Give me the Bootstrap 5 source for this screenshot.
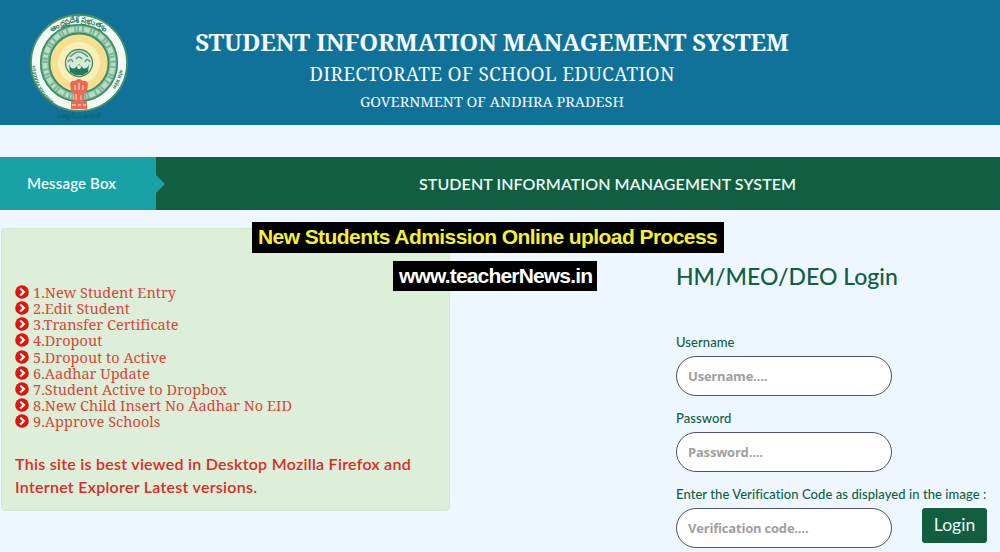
<!DOCTYPE html>
<html lang="en">
<head>
<meta charset="utf-8">
<meta name="viewport" content="width=device-width, initial-scale=1">
<title>Student Information Management System</title>
<link rel="stylesheet" href="https://cdn.jsdelivr.net/npm/bootstrap@5.3.0/dist/css/bootstrap.min.css">
<style>
  body { background: #eef7ff; font-family: Lato, "Open Sans", sans-serif; height: 552px; overflow: hidden; color: #10603f; }
  .serif { font-family: "Noto Serif", "DejaVu Serif Condensed", "DejaVu Serif", serif; font-stretch: condensed; }
  .site-header { background: #107299; height: 125px; color: #f2fafe; }
  .emblem { width: 100px; height: 114px; margin: 10px 0 0 29px; }
  .titles { width: 680px; margin-left: 23px; white-space: nowrap; }
  .t1 { font-size: 24px; line-height: 32px; font-weight: 700; margin: 26px 0 0; letter-spacing: -.13px; }
  .t2 { font-size: 19px; line-height: 28px; margin: 2px 0 0; letter-spacing: .24px; }
  .t3 { font-size: 14.5px; line-height: 20px; margin: 3px 0 0; }
  .ribbon { margin-top: 32px; height: 53px; background: #115f40; color: #eefaf5; font-weight: 600; }
  .ribbon-tag { width: 156px; background: #18a2a5; padding-left: 27px; font-size: 15px; letter-spacing: .15px; }
  .ribbon-tag::after { content: ""; position: absolute; left: 156px; top: 18px; border: 9px solid transparent; border-left-color: #18a2a5; border-right: 0; }
  .ribbon-title { padding-left: 263px; font-size: 16px; letter-spacing: .09px; }
  .message-panel { width: 449px; height: 283px; margin: 18px 0 0 1px; padding: 55px 13px 0; background: #ddefd8; border: 1px solid #d3e9cc; border-radius: 4px; }
  .menu-line { font-size: 14.5px; line-height: 16.15px; height: 16.15px; color: #d8463a; white-space: nowrap; gap: 4px; letter-spacing: .03px; }
  .menu-line svg { width: 14px; height: 14px; flex: none; }
  .notice { font-size: 16px; line-height: 22.5px; margin-top: 24px; color: #dc2a26; font-weight: 600; letter-spacing: .27px; white-space: nowrap; }
  .login-form { width: 324px; margin-top: 48px; }
  .login-form h1 { font-size: 23px; line-height: 36px; font-weight: 500; margin: 0 0 39px; white-space: nowrap; }
  .login-form label { display: block; font-size: 13px; line-height: 18px; height: 23px; font-weight: 500; letter-spacing: .07px; white-space: nowrap; }
  .login-form .form-control { width: 216px; height: 40px; border: 1px solid #4d5078; border-radius: 20px; padding: 0 11px; font: 700 13px "Open Sans", sans-serif; }
  .login-form .short { letter-spacing: -.2px; }
  .login-form .code { letter-spacing: -.2px; }
  .form-control::placeholder { color: #a0a0a0; }
  .field { margin-bottom: 13px; }
  .btn-login { width: 65px; height: 35px; background: #115f40; color: #eefaf5; border-radius: 3px; font-size: 17.6px; padding: 0; margin-left: 30px; border: 0; }
  .caption-strip { background: #000; font: 700 21px/29px "Liberation Sans", sans-serif; white-space: nowrap; position: absolute; padding-left: 6px; }
  .cap-a { left: 252px; top: 222px; width: 472px; height: 31px; color: #f4f032; letter-spacing: -.58px; }
  .cap-b { left: 393px; top: 261px; width: 204px; height: 30px; color: #fff; letter-spacing: -.83px; }
</style>
<script src="https://cdn.jsdelivr.net/npm/bootstrap@5.3.0/dist/js/bootstrap.bundle.min.js"></script>
</head>
<body class="position-relative">
<svg width="0" height="0" class="position-absolute">
  <symbol id="chevron" viewBox="0 0 14 14"><circle cx="7" cy="7" r="6.8" fill="#e3120e"/><path d="M5.2 3.5 8.9 7l-3.7 3.5" fill="none" stroke="#f6f3e4" stroke-width="2.3"/></symbol>
</svg>
<header class="site-header d-flex">
  <svg class="emblem flex-shrink-0" viewBox="29 10 100 114">
    <circle cx="79" cy="63" r="48" fill="#f4faf3" stroke="#43936d" stroke-width="1.8"/>
    <path id="arcTop" d="M38.500 63a40.500 40.500 0 0 1 81 0" fill="none"/>
    <path id="arcLeft" d="M60 105A45 45 0 0 1 36 58" fill="none"/>
    <path id="arcRight" d="M120 60a41 41 0 0 1-14 34" fill="none"/>
    <circle cx="79" cy="63" r="34" fill="none" stroke="#7db797" stroke-width="10"/>
    <circle cx="79" cy="63" r="34" fill="none" stroke="#b9dcc5" stroke-width="5" stroke-dasharray="3 2 6 2 1 2"/>
    <circle cx="79" cy="63" r="38.3" fill="none" stroke="#3b8d66" stroke-width="1.6"/>
    <circle cx="79" cy="63" r="29.5" fill="#f6e08f" stroke="#3b8d66" stroke-width="1.8"/>
    <circle cx="79" cy="63" r="21" fill="#fbefb8"/>
    <circle cx="79" cy="63" r="13.500" fill="#d7ead6" stroke="#3c8d68" stroke-width="1.3"/>
    <path d="M70 57q9-10 18 0M68 62q3-5 5 0m3-3q3-4 6 0m3 3q2-5 5 0" fill="none" stroke="#5c9f80" stroke-width="1.6"/>
    <path d="M69 64q2 6 6 4l4-4 4 4q4 2 6-4l-1 8-5 3h-8l-5-3z" fill="#23795a"/>
    <circle cx="79" cy="67" r="2" fill="#eff8ed"/>
    <path d="M70 84q1-4 5-3 4-4 8 0 4-1 5 3l-1 7-3 3v7h3v8H71v-8h3v-7l-3-3z" fill="#ec6a55"/>
    <path d="M75 85v5m4-7v7m4-5v5M76 94v6m5-5v5M72 105h4m2 0h3m2 0h3" stroke="#f8cbb5" stroke-width="1.3"/>
    <g font-weight="700" fill="#357e60" font-family="Noto Sans, sans-serif">
      <text font-size="7.5"><textPath href="#arcTop" startOffset="50%" text-anchor="middle">ఆంధ్రప్రదేశ్ ప్రభుత్వం</textPath></text>
      <text font-size="4.5"><textPath href="#arcLeft" startOffset="50%" text-anchor="middle">ANDHRA PRADESH</textPath></text>
      <text font-size="5"><textPath href="#arcRight" startOffset="50%" text-anchor="middle">आंध्र प्रदेश</textPath></text>
      <text x="79" y="118" font-size="6.5" text-anchor="middle" fill="#126474">సత్యమేవ జయతే</text>
    </g>
  </svg>
  <div class="titles serif text-center">
    <h1 class="t1">STUDENT INFORMATION MANAGEMENT SYSTEM</h1>
    <p class="t2">DIRECTORATE OF SCHOOL EDUCATION</p>
    <p class="t3">GOVERNMENT OF ANDHRA PRADESH</p>
  </div>
</header>
<div class="ribbon d-flex align-items-center position-relative">
  <div class="ribbon-tag h-100 d-flex align-items-center">Message Box</div>
  <div class="ribbon-title">STUDENT INFORMATION MANAGEMENT SYSTEM</div>
</div>
<main class="d-flex justify-content-between">
  <section class="message-panel">
    <div class="serif">
      <div class="menu-line d-flex align-items-center"><svg><use href="#chevron"/></svg>1.New Student Entry</div>
      <div class="menu-line d-flex align-items-center"><svg><use href="#chevron"/></svg>2.Edit Student</div>
      <div class="menu-line d-flex align-items-center"><svg><use href="#chevron"/></svg>3.Transfer Certificate</div>
      <div class="menu-line d-flex align-items-center"><svg><use href="#chevron"/></svg>4.Dropout</div>
      <div class="menu-line d-flex align-items-center"><svg><use href="#chevron"/></svg>5.Dropout to Active</div>
      <div class="menu-line d-flex align-items-center"><svg><use href="#chevron"/></svg>6.Aadhar Update</div>
      <div class="menu-line d-flex align-items-center"><svg><use href="#chevron"/></svg>7.Student Active to Dropbox</div>
      <div class="menu-line d-flex align-items-center"><svg><use href="#chevron"/></svg>8.New Child Insert No Aadhar No EID</div>
      <div class="menu-line d-flex align-items-center"><svg><use href="#chevron"/></svg>9.Approve Schools</div>
    </div>
    <p class="notice">This site is best viewed in Desktop Mozilla Firefox and<br>Internet Explorer Latest versions.</p>
  </section>
  <form class="login-form">
    <h1>HM/MEO/DEO Login</h1>
    <div class="field"><label for="user">Username</label><input id="user" class="form-control short" placeholder="Username...."></div>
    <div class="field"><label for="pass">Password</label><input id="pass" type="password" class="form-control short" placeholder="Password...."></div>
    <label for="code">Enter the Verification Code as displayed in the image :</label>
    <div class="d-flex"><input id="code" class="form-control code" placeholder="Verification code...."><button type="button" class="btn btn-login">Login</button></div>
  </form>
</main>
<div class="caption-strip cap-a">New Students Admission Online upload Process</div>
<div class="caption-strip cap-b">www.teacherNews.in</div>
</body>
</html>
